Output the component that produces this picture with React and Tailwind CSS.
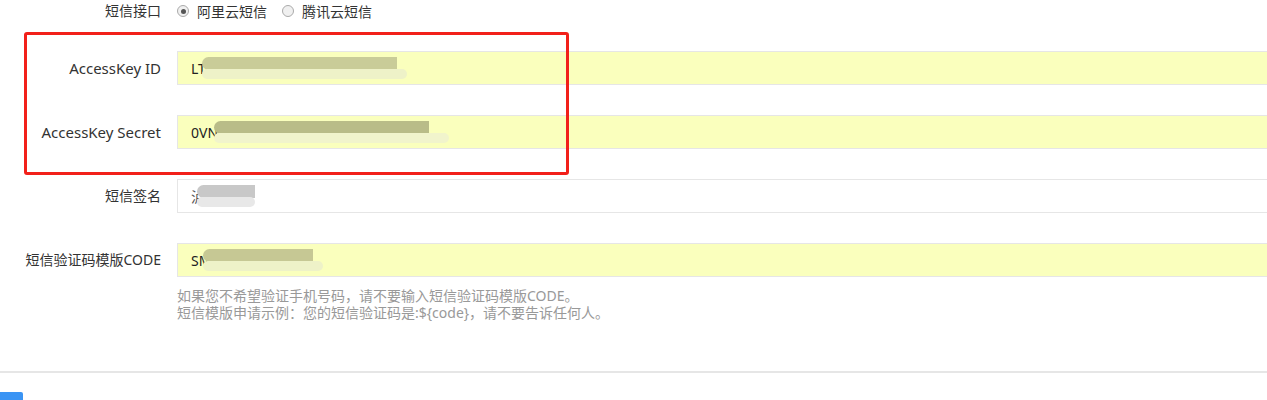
import React from "react";

const font = { fontFamily: '"Noto Sans", "Noto Sans CJK SC", sans-serif' };

function Radio({ checked }) {
  return (
    <span className="relative inline-flex w-[12px] h-[12px] rounded-full border border-[#aaa] bg-[#f0f0f0] items-center justify-center">
      {checked && <span className="w-[5px] h-[5px] rounded-full bg-[#555]" />}
    </span>
  );
}

function Row({ label, children, yellow = true, latin = false }) {
  return (
    <div className="flex items-center h-[34px]">
      <div
        className={`w-[161px] shrink-0 text-right text-[#333] leading-[20px] ${
          latin ? "text-[15px]" : "text-[14px]"
        }`}
      >
        {label}
      </div>
      <div
        className={`ml-[16px] h-[34px] w-[1120px] shrink-0 border border-[#e6e6e6] flex items-center pl-[13px] text-[14px] text-[#222] ${
          yellow ? "bg-[#faffbd]" : "bg-white"
        }`}
      >
        {children}
      </div>
    </div>
  );
}

function Blur({ w, w2, c1 = "#c9cc98", c2 = "#eef2c8" }) {
  return (
    <span className="relative inline-block h-[26px]" style={{ width: w2 || w }}>
      <span className="absolute left-0 top-[4px] h-[13px] rounded-l-full" style={{ background: c1, width: w }} />
      <span className="absolute left-0 top-[16px] h-[10px] rounded-full" style={{ background: c2, width: w2 || w }} />
    </span>
  );
}

export default function App() {
  return (
    <div className="relative w-[1267px] h-[400px] overflow-hidden bg-white" style={font}>
      <div className="flex items-center h-[22px]">
        <div className="w-[161px] shrink-0 text-right text-[14px] text-[#333] leading-[20px]">短信接口</div>
        <div className="ml-[16px] flex items-center text-[14px] text-[#333]">
          <Radio checked />
          <span className="ml-[8px]">阿里云短信</span>
          <span className="ml-[15px]" />
          <Radio />
          <span className="ml-[8px]">腾讯云短信</span>
        </div>
      </div>

      <div className="mt-[29px] flex flex-col gap-[30px]">
        <Row label="AccessKey ID" latin>
          <span>LT</span>
          <span className="-ml-[4px]"><Blur w={195} w2={205} /></span>
        </Row>
        <Row label="AccessKey Secret" latin>
          <span>0VN</span>
          <span className="-ml-[4px]"><Blur w={215} w2={235} c1="#b9bc88" c2="#f1f4cc" /></span>
        </Row>
        <Row label="短信签名" yellow={false}>
          <span className="text-[#555]">泸</span>
          <span className="-ml-[8px]"><Blur w={58} c1="#c8c8c8" c2="#e8e8e8" /></span>
        </Row>
        <Row label="短信验证码模版CODE">
          <span>SMS</span>
          <span className="-ml-[16px]"><Blur w={110} w2={120} c1="#c6c894" c2="#eef2c8" /></span>
        </Row>
      </div>

      <div className="ml-[177px] mt-[10px] text-[14px] leading-[17px] text-[#999]">
        <div>如果您不希望验证手机号码，请不要输入短信验证码模版CODE。</div>
        <div>短信模版申请示例：您的短信验证码是:${"{code}"}，请不要告诉任何人。</div>
      </div>

      <div className="mt-[50px] h-[2px] bg-[#e6e6e6]" />

      <div className="mt-[19px] w-[23px] h-[20px] rounded-tr-[2px] bg-[#3a94f4]" />

      <div className="absolute left-[24px] top-[32px] w-[545px] h-[143px] border-[3px] border-[#f2201a] rounded-[3px]" />
    </div>
  );
}
